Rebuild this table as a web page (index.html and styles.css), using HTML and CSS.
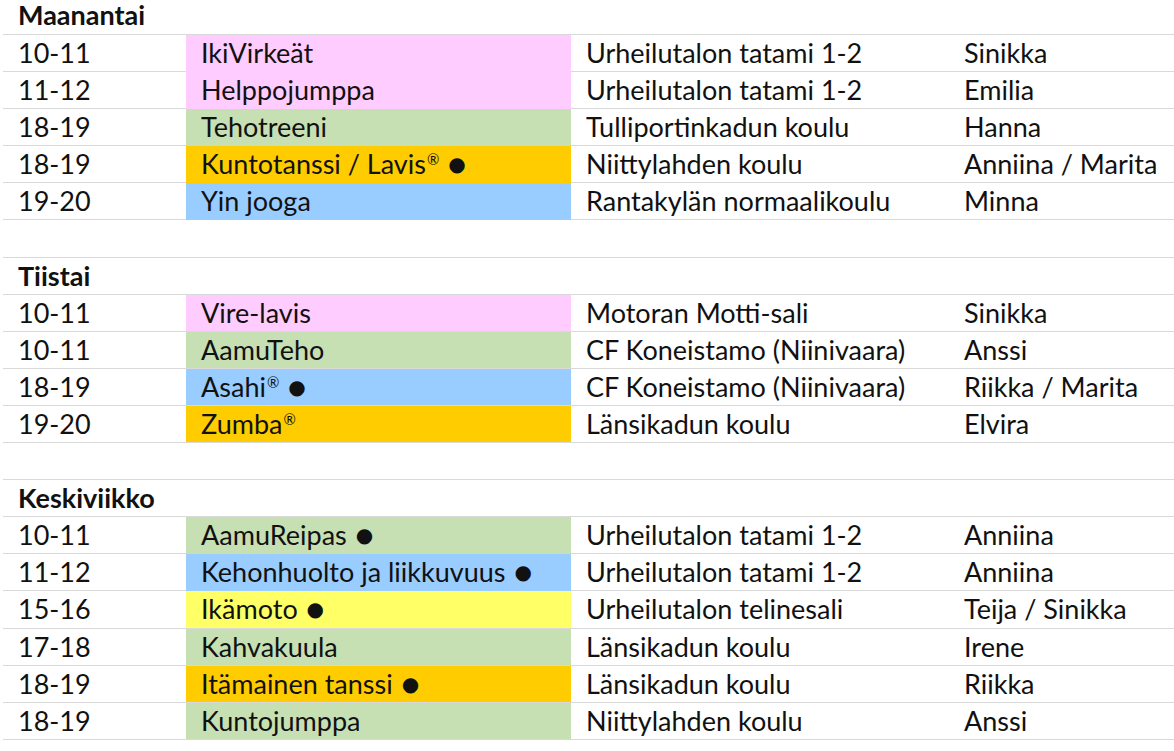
FILE: index.html
```html
<!DOCTYPE html>
<html lang="fi">
<head>
<meta charset="utf-8">
<title>Viikko-ohjelma</title>
<link rel="stylesheet" href="styles.css">
</head>
<body>
<div class="sheet">
  <div class="row first"><div class="c day">Maanantai</div><div class="c"></div><div class="c"></div><div class="c"></div></div>
  <div class="row"><div class="c time">10-11</div><div class="c name pink">IkiVirkeät</div><div class="c place">Urheilutalon tatami 1-2</div><div class="c coach">Sinikka</div></div>
  <div class="row"><div class="c time">11-12</div><div class="c name pink">Helppojumppa</div><div class="c place">Urheilutalon tatami 1-2</div><div class="c coach">Emilia</div></div>
  <div class="row"><div class="c time">18-19</div><div class="c name green">Tehotreeni</div><div class="c place">Tulliportinkadun koulu</div><div class="c coach">Hanna</div></div>
  <div class="row"><div class="c time">18-19</div><div class="c name orange">Kuntotanssi / Lavis<span class="reg">®</span> <span class="dot">●</span></div><div class="c place">Niittylahden koulu</div><div class="c coach">Anniina / Marita</div></div>
  <div class="row"><div class="c time">19-20</div><div class="c name blue">Yin jooga</div><div class="c place">Rantakylän normaalikoulu</div><div class="c coach">Minna</div></div>
  <div class="row"><div class="c"></div><div class="c"></div><div class="c"></div><div class="c"></div></div>
  <div class="row"><div class="c day">Tiistai</div><div class="c"></div><div class="c"></div><div class="c"></div></div>
  <div class="row"><div class="c time">10-11</div><div class="c name pink">Vire-lavis</div><div class="c place">Motoran Motti-sali</div><div class="c coach">Sinikka</div></div>
  <div class="row"><div class="c time">10-11</div><div class="c name green">AamuTeho</div><div class="c place">CF Koneistamo (Niinivaara)</div><div class="c coach">Anssi</div></div>
  <div class="row"><div class="c time">18-19</div><div class="c name blue">Asahi<span class="reg">®</span> <span class="dot">●</span></div><div class="c place">CF Koneistamo (Niinivaara)</div><div class="c coach">Riikka / Marita</div></div>
  <div class="row"><div class="c time">19-20</div><div class="c name orange">Zumba<span class="reg">®</span></div><div class="c place">Länsikadun koulu</div><div class="c coach">Elvira</div></div>
  <div class="row"><div class="c"></div><div class="c"></div><div class="c"></div><div class="c"></div></div>
  <div class="row"><div class="c day">Keskiviikko</div><div class="c"></div><div class="c"></div><div class="c"></div></div>
  <div class="row"><div class="c time">10-11</div><div class="c name green">AamuReipas <span class="dot">●</span></div><div class="c place">Urheilutalon tatami 1-2</div><div class="c coach">Anniina</div></div>
  <div class="row"><div class="c time">11-12</div><div class="c name blue">Kehonhuolto ja liikkuvuus <span class="dot">●</span></div><div class="c place">Urheilutalon tatami 1-2</div><div class="c coach">Anniina</div></div>
  <div class="row"><div class="c time">15-16</div><div class="c name yellow">Ikämoto <span class="dot">●</span></div><div class="c place">Urheilutalon telinesali</div><div class="c coach">Teija / Sinikka</div></div>
  <div class="row"><div class="c time">17-18</div><div class="c name green">Kahvakuula</div><div class="c place">Länsikadun koulu</div><div class="c coach">Irene</div></div>
  <div class="row"><div class="c time">18-19</div><div class="c name orange">Itämainen tanssi <span class="dot">●</span></div><div class="c place">Länsikadun koulu</div><div class="c coach">Riikka</div></div>
  <div class="row"><div class="c time">18-19</div><div class="c name green">Kuntojumppa</div><div class="c place">Niittylahden koulu</div><div class="c coach">Anssi</div></div>
</div>
</body>
</html>
```

FILE: styles.css
```css
html, body {
  margin: 0;
  padding: 0;
  background: #ffffff;
}

body {
  font-family: Lato, "Liberation Sans", sans-serif;
  font-size: 27px;
  color: #111111;
  overflow: hidden;
}

.sheet {
  width: 1174px;
}

.row {
  display: grid;
  grid-template-columns: 183px 385px 378px 1fr;
  margin-left: 3px;
  height: 37.1px;
  box-sizing: border-box;
  border-bottom: 1px solid #d9d9d9;
}

.row.first {
  height: 35px;
}

.c {
  display: block;
  line-height: 36.5px;
  white-space: nowrap;
}

.time,
.day {
  padding-left: 15px;
}

.day {
  font-weight: 700;
}

.row.first .day {
  line-height: 30px;
}

.name,
.place,
.coach {
  padding-left: 15px;
}

.pink { background: #ffccff; }
.green { background: #c6e0b4; }
.orange { background: #ffcc00; }
.blue { background: #99ccff; }
.yellow { background: #ffff66; }

.reg {
  font-size: 0.55em;
  line-height: 0;
  position: relative;
  top: -0.6em;
  margin-left: 1px;
}

.dot {
  font-family: "DejaVu Sans", sans-serif;
  font-size: 20px;
  line-height: 0;
  position: relative;
  top: -3px;
  margin-left: 2px;
}
```
